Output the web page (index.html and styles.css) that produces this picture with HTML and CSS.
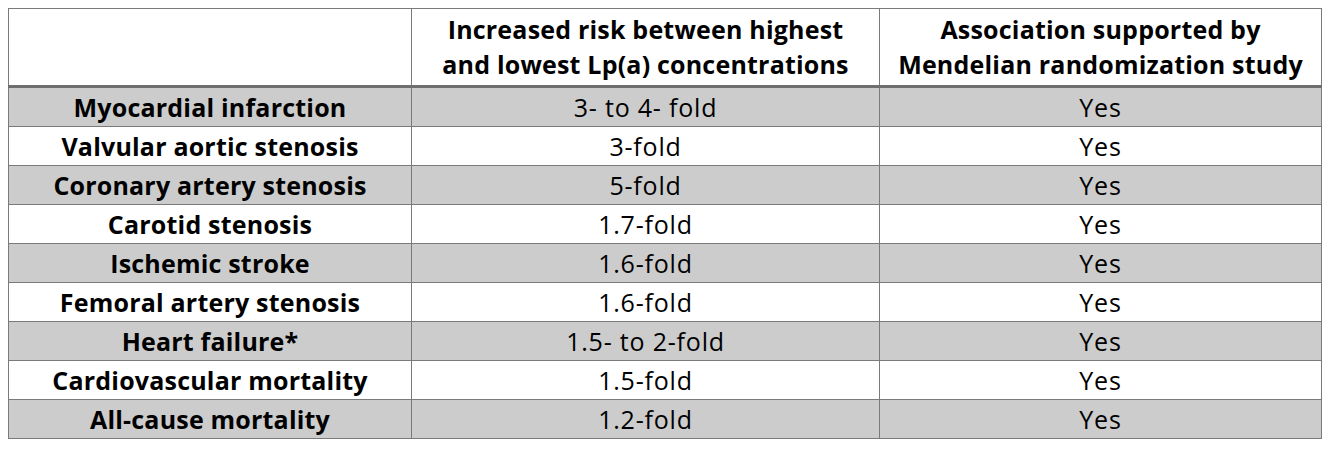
FILE: index.html
```html
<!DOCTYPE html>
<html>
<head>
<meta charset="utf-8">
<link rel="stylesheet" href="styles.css">
</head>
<body>
<table class="risk">
  <colgroup>
    <col class="c1"><col class="c2"><col class="c3">
  </colgroup>
  <thead>
    <tr>
      <th></th>
      <th>Increased risk between highest<br>and lowest Lp(a) concentrations</th>
      <th>Association supported by<br>Mendelian randomization study</th>
    </tr>
  </thead>
  <tbody>
    <tr class="alt"><th>Myocardial infarction</th><td>3- to 4- fold</td><td>Yes</td></tr>
    <tr><th>Valvular aortic stenosis</th><td>3-fold</td><td>Yes</td></tr>
    <tr class="alt"><th>Coronary artery stenosis</th><td>5-fold</td><td>Yes</td></tr>
    <tr><th>Carotid stenosis</th><td>1.7-fold</td><td>Yes</td></tr>
    <tr class="alt"><th>Ischemic stroke</th><td>1.6-fold</td><td>Yes</td></tr>
    <tr><th>Femoral artery stenosis</th><td>1.6-fold</td><td>Yes</td></tr>
    <tr class="alt"><th>Heart failure*</th><td>1.5- to 2-fold</td><td>Yes</td></tr>
    <tr><th>Cardiovascular mortality</th><td>1.5-fold</td><td>Yes</td></tr>
    <tr class="alt"><th>All-cause mortality</th><td>1.2-fold</td><td>Yes</td></tr>
  </tbody>
</table>
</body>
</html>
```
FILE: styles.css
```css
html, body {
  margin: 0;
  padding: 0;
  background: #ffffff;
}
body {
  padding: 8px;
  font-family: "Open Sans", Lato, sans-serif;
  color: #000;
}
.risk {
  border-collapse: collapse;
  table-layout: fixed;
  width: 1313px;
}
.c1 { width: 403px; }
.c2 { width: 468px; }
.c3 { width: 442px; }
.risk th, .risk td {
  border: 1px solid #7a7a7a;
  text-align: center;
  padding: 0;
  font-size: 25px;
  letter-spacing: 0.2px;
  white-space: nowrap;
}
.risk thead th {
  height: 76px;
  font-weight: 700;
  line-height: 35px;
  border-bottom: 3px solid #6e6e6e;
}
.risk tbody th {
  font-weight: 700;
}
.risk tbody td {
  font-weight: 400;
  letter-spacing: 0.8px;
}
.risk tbody tr {
  height: 39px;
}
.risk tbody th, .risk tbody td {
  height: 38px;
  line-height: 38px;
}
.risk tr.alt th, .risk tr.alt td {
  background: #cccccc;
}
```
